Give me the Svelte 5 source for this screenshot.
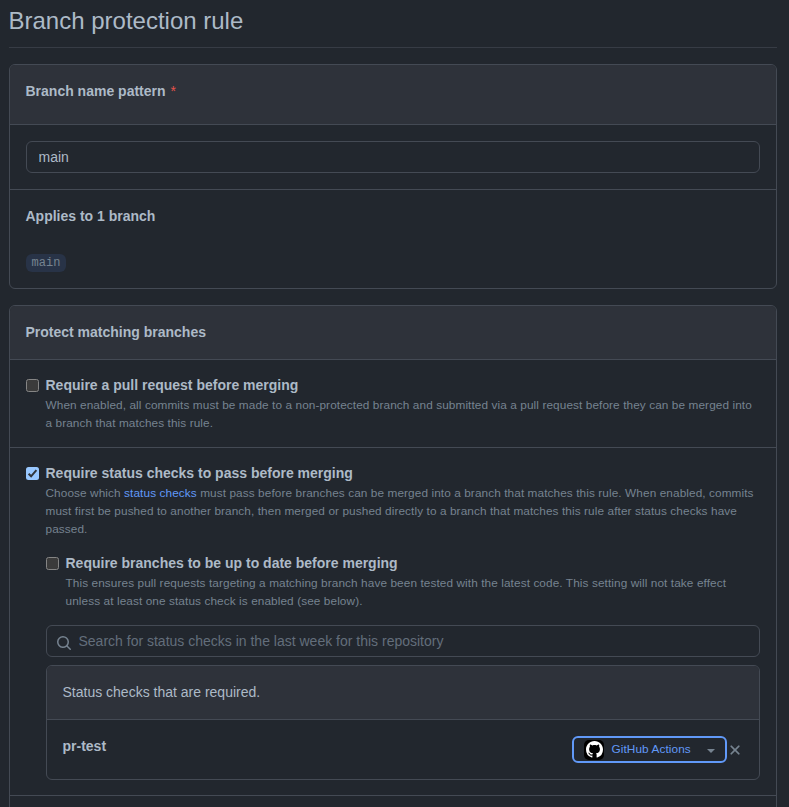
<script>
  let pattern = $state('main');
  let query = $state('');
</script>

{#snippet checkbox(checked)}
  <span class="check" class:checked role="checkbox" aria-checked={checked} tabindex="0">
    {#if checked}
      <svg width="13" height="13" viewBox="0 0 13 13"><path d="M2.6 6.8 5.1 9.3 10.4 3.1" fill="none" stroke="#32363b" stroke-width="2" /></svg>
    {/if}
  </span>
{/snippet}

<main>
  <h2>Branch protection rule</h2>

  <section class="box">
    <header class="tall"><strong>Branch name pattern</strong><span class="star">*</span></header>
    <div class="row field"><input class="text" bind:value={pattern} aria-label="Branch name pattern" /></div>
    <div class="row applies">
      <strong>Applies to 1 branch</strong>
      <code>main</code>
    </div>
  </section>

  <section class="box">
    <header><strong>Protect matching branches</strong></header>

    <div class="row rule first">
      {@render checkbox(false)}
      <div class="body">
        <strong>Require a pull request before merging</strong>
        <p>When enabled, all commits must be made to a non-protected branch and submitted via a pull request before they can be merged into<br />a branch that matches this rule.</p>
      </div>
    </div>

    <div class="row rule second">
      {@render checkbox(true)}
      <div class="body">
        <strong>Require status checks to pass before merging</strong>
        <p>Choose which <span class="link">status checks</span> must pass before branches can be merged into a branch that matches this rule. When enabled, commits<br />must first be pushed to another branch, then merged or pushed directly to a branch that matches this rule after status checks have<br />passed.</p>

        <div class="rule nested">
          {@render checkbox(false)}
          <div class="body">
            <strong>Require branches to be up to date before merging</strong>
            <p>This ensures pull requests targeting a matching branch have been tested with the latest code. This setting will not take effect<br />unless at least one status check is enabled (see below).</p>
          </div>
        </div>

        <label class="search">
          <svg width="16" height="16" viewBox="0 0 16 16"><path fill="currentColor" d="M10.68 11.74a6 6 0 0 1-7.922-8.982 6 6 0 0 1 8.982 7.922l3.04 3.04a.749.749 0 0 1-.326 1.275.749.749 0 0 1-.734-.215ZM11.5 7a4.499 4.499 0 1 0-8.997 0A4.499 4.499 0 0 0 11.5 7Z" /></svg>
          <input bind:value={query} placeholder="Search for status checks in the last week for this repository" />
        </label>

        <div class="box checks">
          <header>Status checks that are required.</header>
          <div class="row item">
            <strong>pr-test</strong>
            <button class="app">
              <span class="avatar">
                <svg width="17" height="17" viewBox="0 0 16 16"><path fill="#fff" d="M8 0c4.42 0 8 3.58 8 8a8.013 8.013 0 0 1-5.45 7.59c-.4.08-.55-.17-.55-.38 0-.27.01-1.13.01-2.2 0-.75-.25-1.23-.54-1.48 1.78-.2 3.65-.88 3.65-3.95 0-.88-.31-1.59-.82-2.15.08-.2.36-1.02-.08-2.12 0 0-.67-.22-2.2.82-.64-.18-1.32-.27-2-.27-.68 0-1.36.09-2 .27-1.53-1.03-2.2-.82-2.2-.82-.44 1.1-.16 1.92-.08 2.12-.51.56-.82 1.28-.82 2.15 0 3.06 1.86 3.75 3.64 3.95-.23.2-.44.55-.51 1.07-.46.21-1.61.55-2.33-.66-.15-.24-.6-.83-1.23-.82-.67.01-.27.38.01.53.34.19.73.9.82 1.13.16.45.68 1.31 2.69.94 0 .67.01 1.3.01 1.49 0 .21-.15.45-.55.38A7.995 7.995 0 0 1 0 8c0-4.42 3.58-8 8-8Z" /></svg>
              </span>
              <span class="name">GitHub Actions</span>
              <span class="caret"></span>
            </button>
            <button class="remove" aria-label="Remove pr-test">
              <svg width="16" height="16" viewBox="0 0 16 16"><path fill="currentColor" stroke="currentColor" stroke-width=".3" d="M3.72 3.72a.75.75 0 0 1 1.06 0L8 6.94l3.22-3.22a.749.749 0 0 1 1.275.326.749.749 0 0 1-.215.734L9.06 8l3.22 3.22a.749.749 0 0 1-.326 1.275.749.749 0 0 1-.734-.215L8 9.06l-3.22 3.22a.751.751 0 0 1-1.042-.018.751.751 0 0 1-.018-1.042L6.94 8 3.72 4.78a.75.75 0 0 1 0-1.06Z" /></svg>
            </button>
          </div>
        </div>
      </div>
    </div>
    <div class="row rest"></div>
  </section>
</main>

<style>
  :global(body) { background: #22272e; }
  main {
    box-sizing: border-box;
    width: 789px;
    height: 807px;
    overflow: hidden;
    padding: 0 12px 0 9px;
    background: #22272e;
    color: #adbac7;
    font: 14px/21px "Liberation Sans", Arial, sans-serif;
  }
  h2 {
    box-sizing: border-box;
    height: 48px;
    margin: 0 0 16px;
    padding-top: 3px;
    border-bottom: 1px solid #373c45;
    font-size: 24px;
    line-height: 36px;
    font-weight: 400;
    text-indent: -0.5px;
  }
  .box {
    border: 1px solid #444a54;
    border-radius: 6px;
    margin-bottom: 16px;
  }
  header {
    box-sizing: border-box;
    height: 53px;
    padding: 16px 16px 16px 15.5px;
    background: #2e323a;
    border-radius: 5px 5px 0 0;
  }
  header.tall { height: 59px; }
  .star { color: #e5534b; margin-left: 5px; }
  .row { box-sizing: border-box; border-top: 1px solid #444a54; padding: 16px; }
  .field { height: 65px; }
  input { font: inherit; color: inherit; outline: 0; }
  .text {
    display: block;
    box-sizing: border-box;
    width: 100%;
    height: 32px;
    padding: 0 11.5px;
    border: 1px solid #444a54;
    border-radius: 6px;
    background: #22272e;
  }
  .applies {
    display: flex;
    flex-direction: column;
    align-items: flex-start;
    height: 99px;
  }
  .applies strong, .item strong { text-indent: -0.5px; }
  code {
    box-sizing: border-box;
    margin-top: 27px;
    padding: 1px 5.6px 0;
    height: 18px;
    border-radius: 6px;
    background: #283347;
    color: #768390;
    font: 12px/17px "Liberation Mono", monospace;
  }
  .rule { display: flex; align-items: flex-start; }
  .row.rule { padding-top: 15px; }
  .first { height: 88px; }
  .second { height: 348px; }
  .body { flex: 1; min-width: 0; }
  .check {
    box-sizing: border-box;
    flex: none;
    width: 13px;
    height: 13px;
    margin: 4px 7px 0 0;
    border: 1px solid #858585;
    border-radius: 2.5px;
    background: #3b3b3b;
  }
  .check.checked { border: 0; background: #99c8ff; }
  .check svg { display: block; }
  .body > strong { display: block; line-height: 20px; text-indent: -0.5px; }
  p {
    margin: 1px 0 0 -0.5px;
    color: #768390;
    font-size: 11.8px;
    letter-spacing: 0.093px;
    line-height: 18px;
    white-space: nowrap;
  }
  .link { color: #6199f8; }
  .nested { margin-top: 15px; }
  .search {
    display: flex;
    align-items: center;
    box-sizing: border-box;
    height: 32px;
    margin-top: 15px;
    padding: 0 9px;
    border: 1px solid #444a54;
    border-radius: 6px;
    color: #768390;
  }
  .search svg { margin-top: 3px; }
  .search input { flex: 1; border: 0; background: none; padding: 0 0 0 6.5px; }
  .search input::placeholder { color: #636e7b; opacity: 1; }
  .checks { margin: 8px 0 0; }
  .item { display: flex; align-items: flex-start; height: 60px; }
  .item strong { flex: 1; }
  button { font: inherit; margin: 0; padding: 0; border: 0; background: none; color: #768390; }
  .app {
    display: flex;
    align-items: center;
    box-sizing: border-box;
    width: 155px;
    height: 27px;
    padding-left: 10px;
    border: 2px solid #6199f8;
    border-radius: 6px;
  }
  .avatar {
    display: flex;
    align-items: center;
    justify-content: center;
    width: 20px;
    height: 20px;
    border-radius: 5px;
    background: #000;
  }
  .name {
    width: 80px;
    margin-left: 7.5px;
    color: #6199f8;
    font-size: 11.8px;
    letter-spacing: 0.093px;
    text-align: left;
    white-space: nowrap;
  }
  .caret { margin: 3px 0 0 15.5px; border: 4px solid transparent; border-top-color: currentColor; border-bottom: 0; }
  .remove { width: 16px; height: 16px; margin: 6px 0 0; }
  .remove svg { display: block; }
  .rest { height: 60px; }
</style>
